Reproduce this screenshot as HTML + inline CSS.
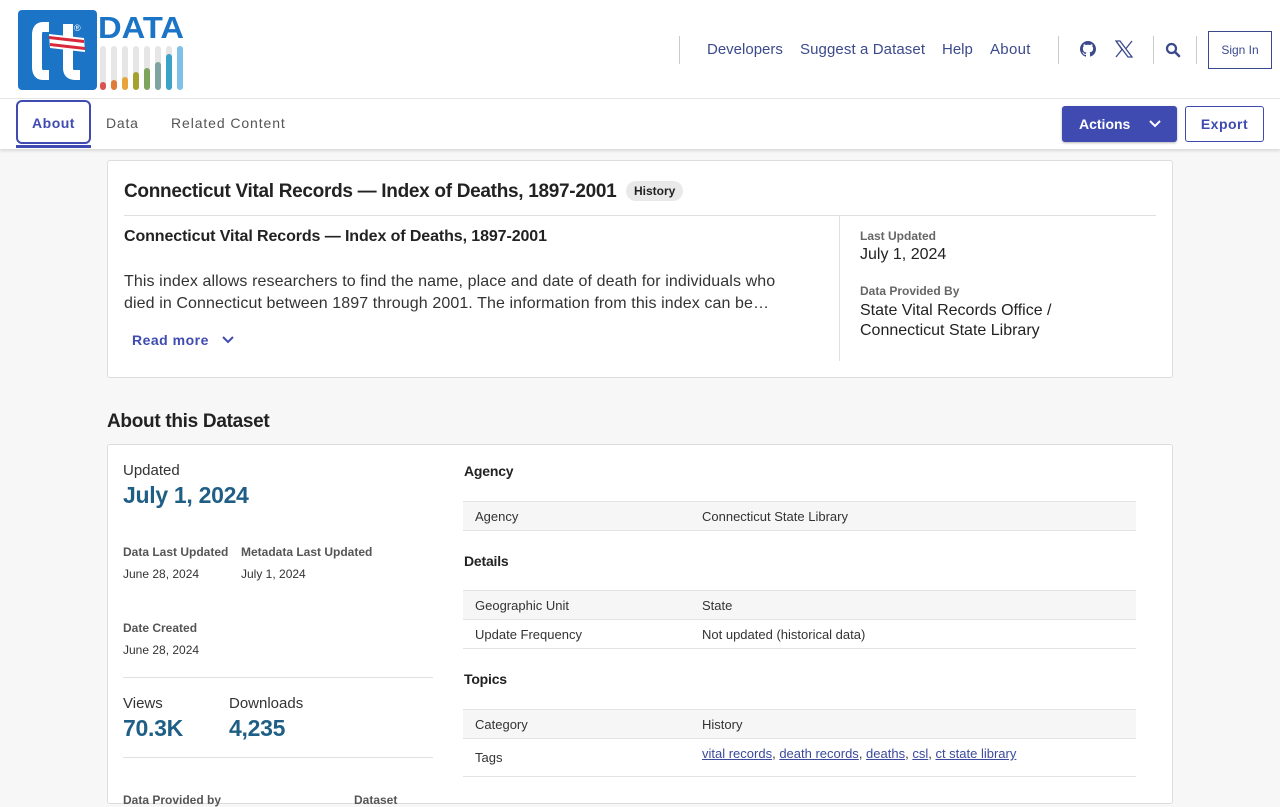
<!DOCTYPE html>
<html><head><meta charset="utf-8"><style>
*{margin:0;padding:0;box-sizing:border-box}
body{width:1280px;height:800px;overflow:hidden;background:#f7f7f7;font-family:"Liberation Sans",Arial,sans-serif;color:#222;position:relative}
.a{position:absolute;white-space:nowrap}
.nav{color:#3b4a8c;font-size:15px}
.vl{position:absolute;width:1px;background:#ccc}
.lbl{font-size:12px;font-weight:bold;color:#555}
.sm{font-size:12px;color:#333}
.row{position:absolute;left:463px;width:673px;border-top:1px solid #e3e3e3;font-size:13px;color:#333}
.row span{position:absolute;top:0}
a{color:#3b4a9c;text-decoration:underline}
</style></head><body>
<div class="a" style="left:0;top:0;width:1280px;height:99px;background:#fff;border-bottom:1px solid #e8e8e8"></div>
<svg class="a" style="left:18px;top:10px" width="168" height="80" viewBox="0 0 168 80">
<rect x="0" y="0" width="79" height="80" rx="4" fill="#1b74c5"/>
<path d="M31 17 H25 Q19 17 19 25 V57 Q19 65 25 65 H31" fill="none" stroke="#fff" stroke-width="10"/>
<path d="M50 14 V58 Q50 65 57 65 H62" fill="none" stroke="#fff" stroke-width="10"/>
<path d="M31 24 L66 28 L67 42 L32 38Z" fill="#fff"/>
<path d="M31 26 L66 30 L66 33 L31 29Z M32 33 L67 37 L67 40 L32 36Z" fill="#d8283a"/>
<text x="56" y="21" font-size="9" fill="#fff" font-family="Liberation Sans">®</text>
<text x="80" y="28" font-size="31" font-weight="bold" fill="#1b74c5" font-family="Liberation Sans" textLength="86" lengthAdjust="spacingAndGlyphs">DATA</text>
<g fill="#e6e6e6"><rect x="82" y="36" width="6" height="44" rx="3"/><rect x="93" y="36" width="6" height="44" rx="3"/><rect x="104" y="36" width="6" height="44" rx="3"/><rect x="115" y="36" width="6" height="44" rx="3"/><rect x="126" y="36" width="6" height="44" rx="3"/><rect x="137" y="36" width="6" height="44" rx="3"/><rect x="148" y="36" width="6" height="44" rx="3"/><rect x="159" y="36" width="6" height="44" rx="3"/></g>
<rect x="82" y="72" width="6" height="8" rx="3" fill="#d9534f"/><rect x="93" y="70" width="6" height="10" rx="3" fill="#e07b3a"/><rect x="104" y="67" width="6" height="13" rx="3" fill="#e8a33a"/><rect x="115" y="62" width="6" height="18" rx="3" fill="#a6a02e"/><rect x="126" y="58" width="6" height="22" rx="3" fill="#7ea35a"/><rect x="137" y="52" width="6" height="28" rx="3" fill="#7fa3a0"/><rect x="148" y="44" width="6" height="36" rx="3" fill="#3aa3c8"/><rect x="159" y="36" width="6" height="44" rx="3" fill="#7ec0e8"/>
</svg>
<div class="vl" style="left:679px;top:36px;height:28px"></div>
<div class="a nav" style="left:707px;top:41px">Developers</div>
<div class="a nav" style="left:800px;top:41px;letter-spacing:.1px">Suggest a Dataset</div>
<div class="a nav" style="left:942px;top:41px">Help</div>
<div class="a nav" style="left:990px;top:41px;letter-spacing:.3px">About</div>
<div class="vl" style="left:1058px;top:36px;height:28px"></div>
<svg class="a" style="left:1080px;top:41px" width="16" height="16" viewBox="0 0 16 16"><path fill="#3b4a8c" d="M8 0C3.6 0 0 3.6 0 8c0 3.5 2.3 6.5 5.5 7.6.4.1.5-.2.5-.4v-1.4c-2.2.5-2.7-1-2.7-1-.4-.9-.9-1.200-.9-1.2-.7-.5.1-.5.1-.5.8.1 1.2.8 1.2.8.7 1.3 1.9.9 2.3.7.1-.5.3-.9.5-1.100-1.8-.2-3.6-.9-3.600-4 0-.9.3-1.6.8-2.100-.1-.2-.4-1 .1-2.100 0 0 .7-.2 2.200.8.6-.2 1.3-.3 2-.3s1.4.1 2 .3c1.5-1 2.200-.8 2.200-.8.4 1.100.2 1.900.1 2.100.5.6.8 1.300.8 2.100 0 3.100-1.900 3.700-3.600 3.900.3.3.5.8.5 1.500v2.200c0 .2.1.5.6.4C13.700 14.500 16 11.500 16 8c0-4.400-3.600-8-8-8z"/></svg>
<svg class="a" style="left:1115px;top:40px" width="18" height="18" viewBox="0 0 18 18"><path d="M1 1 L7 9.5 L1 17 M17 1 L11 8.5 M1 1 H5 L17 17 H13 Z" fill="none" stroke="#3b4a8c" stroke-width="1.3"/></svg>
<div class="vl" style="left:1153px;top:36px;height:28px"></div>
<svg class="a" style="left:1165px;top:42px" width="16" height="16" viewBox="0 0 16 16"><circle cx="6.5" cy="6.5" r="4.5" fill="none" stroke="#3b4a8c" stroke-width="2.2"/><path d="M10 10 L14 14" stroke="#3b4a8c" stroke-width="2.6" stroke-linecap="round"/></svg>
<div class="vl" style="left:1196px;top:36px;height:28px"></div>
<div class="a" style="left:1208px;top:31px;width:64px;height:38px;border:1px solid #3b4a8c;font-size:12px;color:#3b4a8c;text-align:center;line-height:36px">Sign In</div>
<div class="a" style="left:0;top:99px;width:1280px;height:50px;background:#fff;box-shadow:0 2px 3px rgba(0,0,0,.12)"></div>
<div class="a" style="left:16px;top:100px;width:75px;height:44px;border:2px solid #3f4bb0;border-radius:6px;color:#3f4bb0;font-size:14px;font-weight:bold;text-align:center;line-height:42px;letter-spacing:.5px">About</div>
<div class="a" style="left:16px;top:145px;width:75px;height:3px;background:#3f4bb0"></div>
<div class="a" style="left:106px;top:115px;font-size:14px;color:#555;letter-spacing:.8px">Data</div>
<div class="a" style="left:171px;top:115px;font-size:14px;color:#555;letter-spacing:.9px">Related Content</div>
<div class="a" style="left:1062px;top:106px;width:115px;height:36px;background:#3f4bb0;border-radius:3px;color:#fff;font-size:14px;font-weight:bold;line-height:36px;padding-left:17px;box-shadow:0 1px 2px rgba(0,0,0,.3)">Actions</div>
<svg class="a" style="left:1149px;top:119px" width="12" height="10"><path d="M1 2 L6 7 L11 2" fill="none" stroke="#fff" stroke-width="2"/></svg>
<div class="a" style="left:1185px;top:106px;width:79px;height:36px;border:1px solid #3f4bb0;border-radius:3px;color:#3f4bb0;font-size:14px;font-weight:bold;text-align:center;line-height:34px;letter-spacing:.5px">Export</div>
<div class="a" style="left:107px;top:160px;width:1066px;height:218px;background:#fff;border:1px solid #ddd;border-radius:3px"></div>
<div class="a" style="left:124px;top:181px;font-size:19px;font-weight:bold;color:#222;letter-spacing:-.3px">Connecticut Vital Records — Index of Deaths, 1897-2001</div>
<div class="a" style="left:626px;top:181px;height:20px;padding:0 8px;background:#e9e9e9;border-radius:10px;font-size:12px;font-weight:bold;line-height:20px">History</div>
<div class="a" style="left:124px;top:215px;width:1032px;height:1px;background:#e0e0e0"></div>
<div class="a" style="left:124px;top:228px;font-size:16px;font-weight:bold;letter-spacing:-.1px">Connecticut Vital Records — Index of Deaths, 1897-2001</div>
<div class="a" style="left:124px;top:271px;font-size:16px;line-height:22px;color:#333;letter-spacing:.1px">This index allows researchers to find the name, place and date of death for individuals who<br>died in Connecticut between 1897 through 2001. The information from this index can be…</div>
<div class="a" style="left:132px;top:332px;font-size:14px;font-weight:bold;color:#3f4bb0;letter-spacing:.5px">Read more</div>
<svg class="a" style="left:222px;top:335px" width="12" height="10"><path d="M1 2 L6 7 L11 2" fill="none" stroke="#3f4bb0" stroke-width="2"/></svg>
<div class="vl" style="left:839px;top:216px;height:145px;background:#e0e0e0"></div>
<div class="a lbl" style="left:860px;top:229px;color:#666">Last Updated</div>
<div class="a" style="left:860px;top:246px;font-size:16px">July 1, 2024</div>
<div class="a lbl" style="left:860px;top:284px;color:#666">Data Provided By</div>
<div class="a" style="left:860px;top:301px;font-size:16px;line-height:20px">State Vital Records Office /<br>Connecticut State Library</div>
<div class="a" style="left:107px;top:411px;font-size:19px;font-weight:bold;letter-spacing:-.3px">About this Dataset</div>
<div class="a" style="left:107px;top:444px;width:1066px;height:360px;background:#fff;border:1px solid #ddd;border-radius:3px"></div>
<div class="a" style="left:123px;top:462px;font-size:15px;color:#333">Updated</div>
<div class="a" style="left:123px;top:482px;font-size:23px;font-weight:bold;color:#1f5f86;letter-spacing:-.3px">July 1, 2024</div>
<div class="a lbl" style="left:123px;top:545px">Data Last Updated</div>
<div class="a sm" style="left:123px;top:567px">June 28, 2024</div>
<div class="a lbl" style="left:241px;top:545px">Metadata Last Updated</div>
<div class="a sm" style="left:241px;top:567px">July 1, 2024</div>
<div class="a lbl" style="left:123px;top:621px">Date Created</div>
<div class="a sm" style="left:123px;top:643px">June 28, 2024</div>
<div class="a" style="left:123px;top:677px;width:310px;height:1px;background:#e0e0e0"></div>
<div class="a" style="left:123px;top:695px;font-size:15px;color:#333">Views</div>
<div class="a" style="left:123px;top:715px;font-size:23px;font-weight:bold;color:#1f5f86;letter-spacing:-.3px">70.3K</div>
<div class="a" style="left:229px;top:695px;font-size:15px;color:#333">Downloads</div>
<div class="a" style="left:229px;top:715px;font-size:23px;font-weight:bold;color:#1f5f86;letter-spacing:-.3px">4,235</div>
<div class="a" style="left:123px;top:757px;width:310px;height:1px;background:#e0e0e0"></div>
<div class="a lbl" style="left:123px;top:793px">Data Provided by</div>
<div class="a lbl" style="left:354px;top:793px">Dataset</div>
<div class="a" style="left:464px;top:463px;font-size:14px;font-weight:bold;letter-spacing:-.2px">Agency</div>
<div class="row" style="top:501px;height:30px;background:#f6f6f6;border-bottom:1px solid #e3e3e3"><span style="left:12px;top:7px">Agency</span><span style="left:239px;top:7px">Connecticut State Library</span></div>
<div class="a" style="left:464px;top:553px;font-size:14px;font-weight:bold;letter-spacing:-.2px">Details</div>
<div class="row" style="top:590px;height:30px;background:#f6f6f6"><span style="left:12px;top:7px">Geographic Unit</span><span style="left:239px;top:7px">State</span></div>
<div class="row" style="top:619px;height:30px;border-bottom:1px solid #e3e3e3"><span style="left:12px;top:7px">Update Frequency</span><span style="left:239px;top:7px">Not updated (historical data)</span></div>
<div class="a" style="left:464px;top:671px;font-size:14px;font-weight:bold;letter-spacing:-.2px">Topics</div>
<div class="row" style="top:709px;height:30px;background:#f6f6f6"><span style="left:12px;top:7px">Category</span><span style="left:239px;top:7px">History</span></div>
<div class="row" style="top:738px;height:39px;border-bottom:1px solid #e3e3e3"><span style="left:12px;top:11px">Tags</span><span style="left:239px;top:7px"><a>vital records</a>, <a>death records</a>, <a>deaths</a>, <a>csl</a>, <a>ct state library</a></span></div>
</body></html>
